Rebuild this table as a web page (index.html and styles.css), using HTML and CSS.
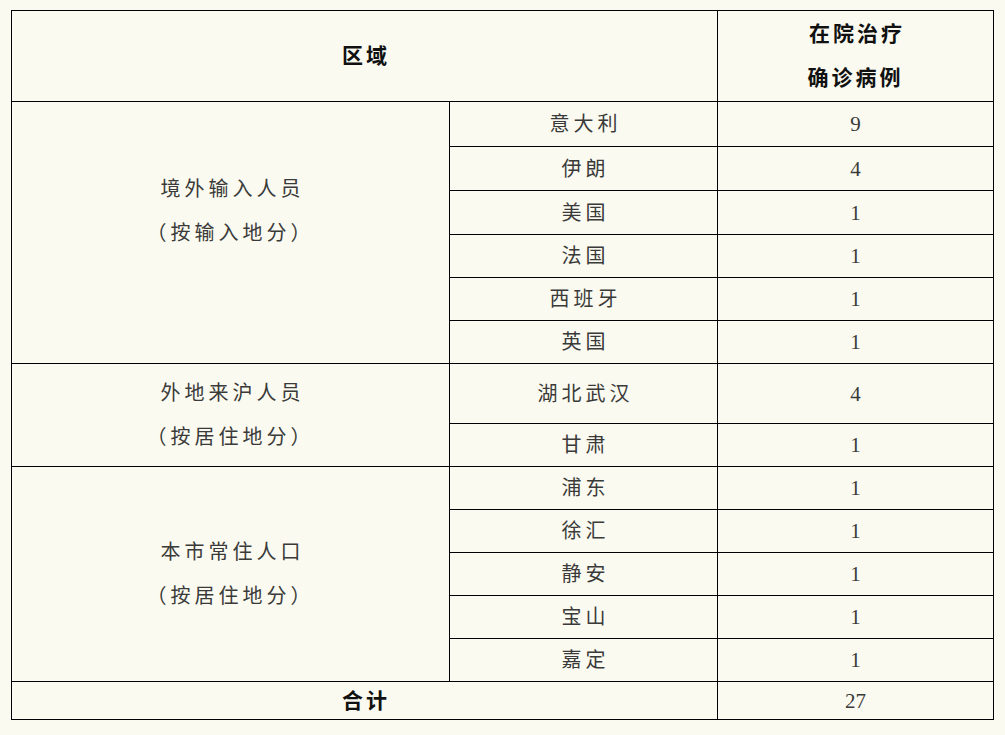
FILE: index.html
```html
<!DOCTYPE html>
<html lang="zh-CN">
<head>
<meta charset="utf-8">
<title>在院治疗确诊病例</title>
<link rel="stylesheet" href="styles.css">
</head>
<body>
<div class="wrap">
<table class="cases">
  <colgroup>
    <col class="c1"><col class="c2"><col class="c3">
  </colgroup>
  <tr class="h-head">
    <th colspan="2">区域</th>
    <th><div class="two">在院治疗<br>确诊病例</div></th>
  </tr>
  <tr class="h45">
    <td rowspan="6" class="group"><div class="two pad3">境外输入人员<br>（按输入地分）</div></td>
    <td>意大利</td><td class="num">9</td>
  </tr>
  <tr class="h44"><td>伊朗</td><td class="num">4</td></tr>
  <tr class="h44"><td>美国</td><td class="num">1</td></tr>
  <tr class="h43"><td>法国</td><td class="num">1</td></tr>
  <tr class="h43"><td>西班牙</td><td class="num">1</td></tr>
  <tr class="h43"><td>英国</td><td class="num">1</td></tr>
  <tr class="h60">
    <td rowspan="2" class="group"><div class="two">外地来沪人员<br>（按居住地分）</div></td>
    <td>湖北武汉</td><td class="num">4</td>
  </tr>
  <tr class="h43"><td>甘肃</td><td class="num">1</td></tr>
  <tr class="h43">
    <td rowspan="5" class="group"><div class="two">本市常住人口<br>（按居住地分）</div></td>
    <td>浦东</td><td class="num">1</td>
  </tr>
  <tr class="h43"><td>徐汇</td><td class="num">1</td></tr>
  <tr class="h43"><td>静安</td><td class="num">1</td></tr>
  <tr class="h43"><td>宝山</td><td class="num">1</td></tr>
  <tr class="h43"><td>嘉定</td><td class="num">1</td></tr>
  <tr class="h38">
    <th colspan="2">合计</th><td class="num">27</td>
  </tr>
</table>
</div>
</body>
</html>
```
FILE: styles.css
```css
html, body {
  margin: 0;
  padding: 0;
  background: #fafaf0;
}
body {
  font-family: "Liberation Serif", "Noto Sans CJK SC", serif;
  color: #3a3a3a;
}
.wrap {
  padding: 10px 0 0 11px;
}
.cases {
  border-collapse: collapse;
  table-layout: fixed;
  width: 982px;
}
.c1 { width: 438px; }
.c2 { width: 268px; }
.c3 { width: 276px; }
.cases th, .cases td {
  border: 1px solid #000;
  padding: 0;
  text-align: center;
  vertical-align: middle;
  font-size: 20px;
  line-height: 24px;
  letter-spacing: 4px;
  text-indent: 4px;
}
.cases th {
  font-weight: bold;
  color: #111;
  font-size: 21px;
  letter-spacing: 3px;
  text-indent: 3px;
}
.two {
  line-height: 44px;
}
.pad3 {
  padding-bottom: 44px;
}
.cases td.num {
  font-size: 21px;
  letter-spacing: 0;
  text-indent: 0;
}
.h-head { height: 91px; }
.h45 { height: 45px; }
.h44 { height: 44px; }
.h43 { height: 43px; }
.h60 { height: 60px; }
.h38 { height: 38px; }
```
